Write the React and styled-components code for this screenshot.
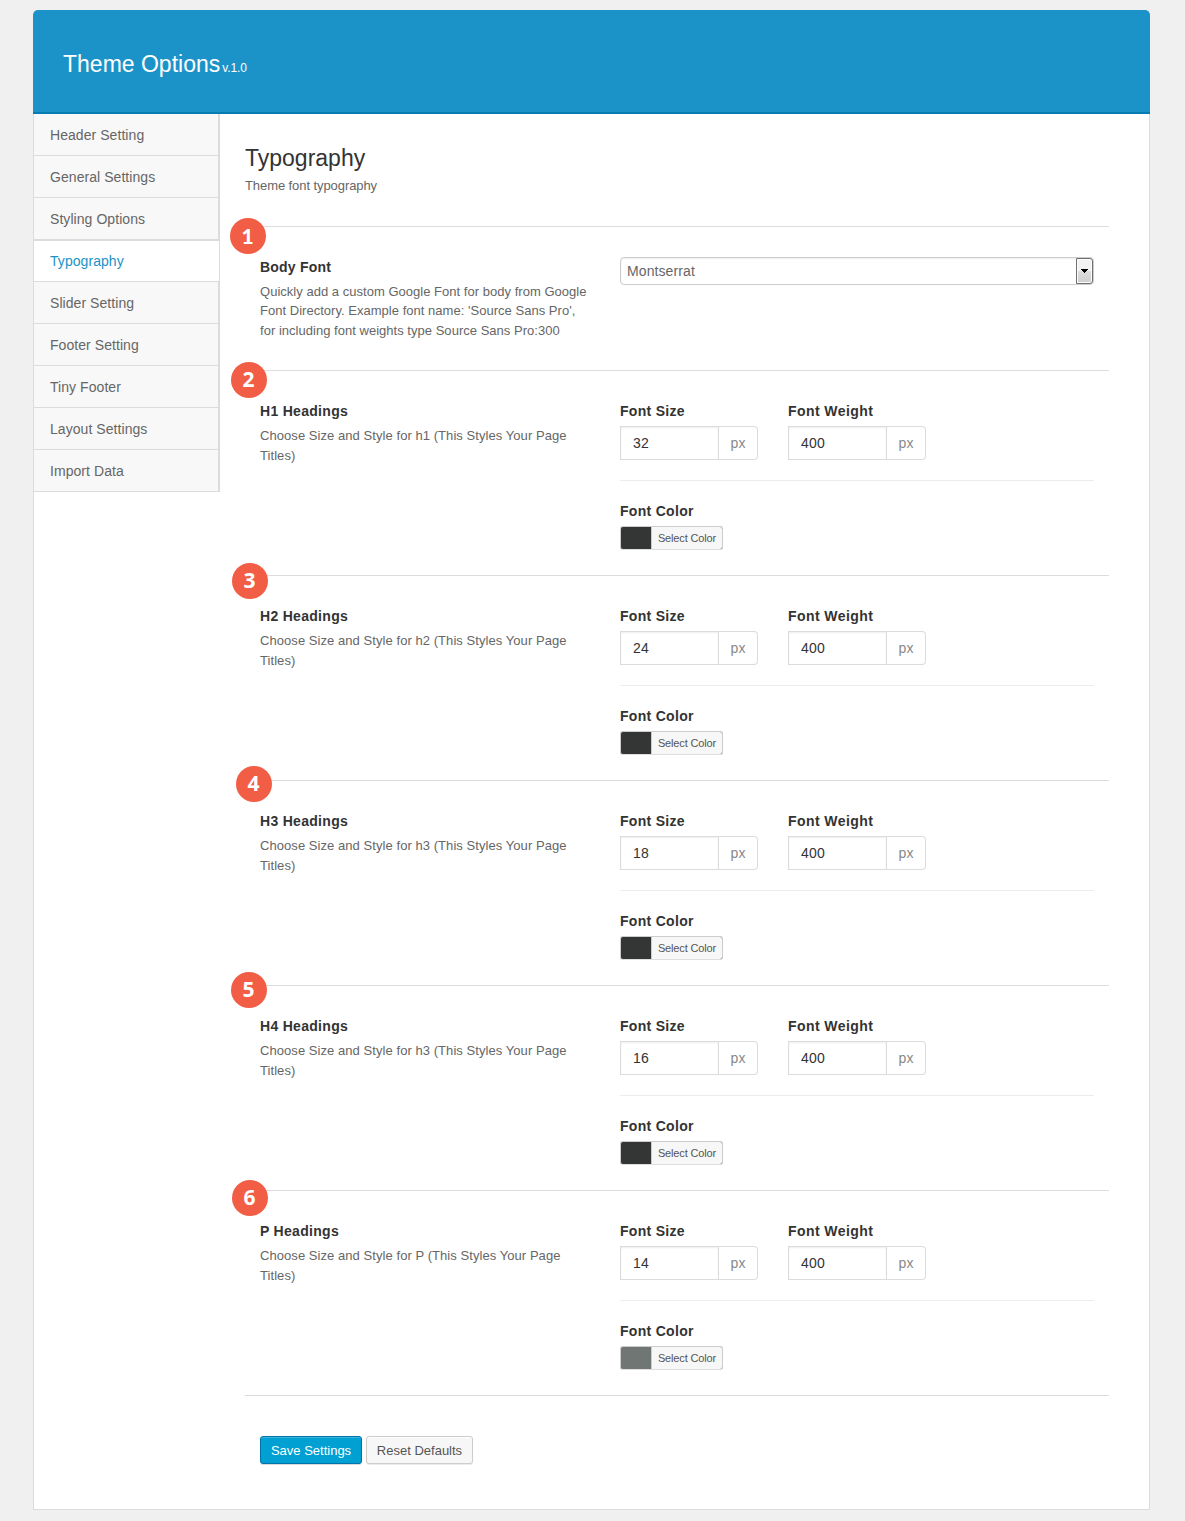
import React from "react";
import styled, { createGlobalStyle } from "styled-components";

const GlobalStyle = createGlobalStyle`
  * { box-sizing: border-box; }
  body {
    margin: 0;
    background: #f0f0f0;
    font-family: "Liberation Sans", Arial, sans-serif;
    font-size: 13px;
    color: #666;
  }
  h1, h2, h3, p, ul { margin: 0; padding: 0; font-weight: normal; }
  input, button { font-family: inherit; }
`;

const Page = styled.div`
  width: 1117px;
  margin: 10px 0 11px 33px;
`;

const Header = styled.header`
  display: flex;
  align-items: baseline;
  gap: 2px;
  height: 104px;
  padding: 40px 30px 0;
  background: #1c93c8;
  border-bottom: 2px solid #077cb0;
  border-radius: 5px 5px 0 0;
  color: #fff;
`;

const Brand = styled.h1`
  font-size: 23px;
  line-height: 28px;
`;

const Version = styled.span`
  font-size: 12px;
  letter-spacing: -0.1px;
`;

const Panel = styled.div`
  display: flex;
  align-items: flex-start;
  height: 1396px;
  background: #fff;
  border: 1px solid #dcdcdc;
  border-top: 0;
`;

const Sidebar = styled.ul`
  flex: none;
  width: 186px;
  list-style: none;
`;

const NavItem = styled.li`
  height: 42px;
  padding-left: 16px;
  font-size: 14px;
  line-height: 42px;
  letter-spacing: 0.06px;
  color: ${(p) => (p.$active ? "#1c93c8" : "#666")};
  background: ${(p) => (p.$active ? "#fff" : "#f8f8f8")};
  border-right: ${(p) => (p.$active ? 1 : 2)}px solid #dcdcdc;
  box-shadow: inset 0 -1px #dcdcdc${(p) => (p.$active ? ", inset 0 1px #dcdcdc" : "")};
`;

const Content = styled.main`
  width: 864px;
  margin-left: 25px;
  padding-top: 29px;
`;

const Heading = styled.h2`
  height: 32px;
  font-size: 23px;
  line-height: 30px;
  color: #333;
`;

const Subtitle = styled.p`
  height: 51px;
  line-height: 21px;
  letter-spacing: -0.08px;
`;

const Section = styled.section`
  position: relative;
  display: flex;
  height: ${(p) => p.$height}px;
  padding: 30px 15px 0;
  border-top: 1px solid #dcdcdc;
`;

const Badge = styled.span`
  position: absolute;
  left: ${(p) => p.$x}px;
  top: ${(p) => p.$y}px;
  width: 36px;
  height: 36px;
  padding-right: 1px;
  border-radius: 50%;
  background: #f15d45;
  color: #fff;
  font: ${(p) => (p.$footed ? '900 21px/35px Lato' : 'bold 21px/35px "Open Sans"')}, sans-serif;
  text-align: center;
`;

const About = styled.div`
  width: 360px;
`;

const Label = styled.h3`
  display: block;
  height: 25px;
  font-size: 14px;
  font-weight: bold;
  line-height: 20px;
  letter-spacing: ${(p) => p.$spacing || 0.3}px;
  color: #333;
`;

const Description = styled.p`
  margin-top: ${(p) => p.$offset || 0}px;
  line-height: 19.5px;
  letter-spacing: ${(p) => p.$spacing}px;
  white-space: pre-line;
`;

const Controls = styled.div`
  width: 474px;
`;

const Select = styled.div`
  display: flex;
  align-items: center;
  justify-content: space-between;
  height: 28px;
  padding-left: 6px;
  border: 1px solid #ccc;
  border-radius: 4px;
  box-shadow: inset 0 1px 2px rgba(0, 0, 0, 0.07);
  font-size: 14px;
  letter-spacing: 0.1px;
  background: #fff;
`;

const SelectArrow = styled.span`
  display: grid;
  place-items: center;
  width: 17px;
  height: 26px;
  border: 1px solid #707070;
  border-radius: 0 3px 3px 0;
  background: linear-gradient(#f2f2f2 0 48%, #dedede 50%, #cfcfcf);
  box-shadow: inset 0 0 0 1px #fcfcfc;
`;

const Fields = styled.div`
  display: flex;
  gap: 30px;
  height: 80px;
  border-bottom: 1px solid #ededed;
`;

const Field = styled.label`
  display: block;
`;

const InputGroup = styled.span`
  display: flex;
  width: 138px;
  height: 34px;
`;

const NumberInput = styled.input`
  width: 99px;
  padding: 0 12px;
  border: 1px solid #dcdcdc;
  border-radius: 0;
  box-shadow: inset 0 1px 2px rgba(0, 0, 0, 0.07);
  font-size: 14px;
  letter-spacing: 0.2px;
  color: #333;
  outline: none;
`;

const Unit = styled.span`
  width: 39px;
  border: 1px solid #dcdcdc;
  border-left: 0;
  border-radius: 0 4px 4px 0;
  font-size: 14px;
  line-height: 32px;
  text-align: center;
  color: #888;
`;

const ColorField = styled.div`
  padding-top: 20px;
`;

const ColorButton = styled.button`
  display: flex;
  width: 103px;
  height: 24px;
  padding: 0;
  border: 1px solid #ccc;
  border-bottom-color: #dedede;
  border-radius: 3px;
  overflow: hidden;
  background: ${(p) => p.$color};
`;

const ColorText = styled.span`
  width: 71px;
  height: 22px;
  margin-left: auto;
  border-left: 1px solid #ccc;
  background: #f7f7f7;
  font-size: 11px;
  line-height: 22px;
  letter-spacing: -0.14px;
  color: #555;
`;

const Actions = styled.div`
  display: flex;
  gap: 4px;
  padding: 40px 15px 0;
  border-top: 1px solid #dcdcdc;
`;

const Button = styled.button`
  width: ${(p) => p.$width}px;
  height: 28px;
  padding: 1px 0 0;
  border: 1px solid ${(p) => (p.$primary ? "#0073aa" : "#ccc")};
  border-radius: 3px;
  background: ${(p) => (p.$primary ? "#00a0d2" : "#f7f7f7")};
  box-shadow: ${(p) =>
    p.$primary
      ? "inset 0 1px 0 rgba(120,200,230,.5), 0 1px 0 rgba(0,0,0,.15)"
      : "inset 0 1px 0 #fff, 0 1px 0 rgba(0,0,0,.08)"};
  color: ${(p) => (p.$primary ? "#fff" : "#555")};
  font-size: 13px;
  line-height: 25px;
`;

const NAV = [
  "Header Setting",
  "General Settings",
  "Styling Options",
  "Typography",
  "Slider Setting",
  "Footer Setting",
  "Tiny Footer",
  "Layout Settings",
  "Import Data",
];

const HEADINGS = [
  { name: "H1", target: "h1", size: 32, color: "#333635", x: -14, y: -9 },
  { name: "H2", target: "h2", size: 24, color: "#333635", x: -13, y: -13 },
  { name: "H3", target: "h3", size: 18, color: "#333635", x: -9, y: -15 },
  { name: "H4", target: "h3", size: 16, color: "#333635", x: -14, y: -14 },
  { name: "P", target: "P", size: 14, color: "#707674", x: -13, y: -11 },
];

function NumberField({ label, value, spacing }) {
  return (
    <Field>
      <Label as="span" $spacing={spacing}>{label}</Label>
      <InputGroup>
        <NumberInput defaultValue={value} />
        <Unit>px</Unit>
      </InputGroup>
    </Field>
  );
}

function HeadingSection({ item, index }) {
  return (
    <Section $height={205}>
      <Badge $x={item.x} $y={item.y}>{index + 2}</Badge>
      <About>
        <Label>{item.name} Headings</Label>
        <Description $spacing={0.06}>
          {`Choose Size and Style for ${item.target} (This Styles Your Page\nTitles)`}
        </Description>
      </About>
      <Controls>
        <Fields>
          <NumberField label="Font Size" value={item.size} />
          <NumberField label="Font Weight" value={400} spacing={0.43} />
        </Fields>
        <ColorField>
          <Label>Font Color</Label>
          <ColorButton $color={item.color}>
            <ColorText>Select Color</ColorText>
          </ColorButton>
        </ColorField>
      </Controls>
    </Section>
  );
}

export default function App() {
  return (
    <>
      <GlobalStyle />
      <Page>
        <Header>
          <Brand>Theme Options</Brand>
          <Version>v.1.0</Version>
        </Header>
        <Panel>
          <Sidebar>
            {NAV.map((name) => (
              <NavItem key={name} $active={name === "Typography"}>{name}</NavItem>
            ))}
          </Sidebar>
          <Content>
            <Heading>Typography</Heading>
            <Subtitle>Theme font typography</Subtitle>
            <Section $height={144}>
              <Badge $footed $x={-15} $y={-9}>1</Badge>
              <About>
                <Label $spacing={0.22}>Body Font</Label>
                <Description $spacing={0.025} $offset={-0.2}>
                  {"Quickly add a custom Google Font for body from Google\nFont Directory. Example font name: 'Source Sans Pro',\nfor including font weights type Source Sans Pro:300"}
                </Description>
              </About>
              <Controls>
                <Select>
                  Montserrat
                  <SelectArrow>
                    <svg width="8" height="4" shapeRendering="crispEdges">
                      <path d="M0 0h7v1H0zM1 1h5v1H1zM2 2h3v1H2zM3 3h1v1H3z" fill="#000" />
                    </svg>
                  </SelectArrow>
                </Select>
              </Controls>
            </Section>
            {HEADINGS.map((item, index) => (
              <HeadingSection key={item.name} item={item} index={index} />
            ))}
            <Actions>
              <Button $primary $width={102}>Save Settings</Button>
              <Button $width={107}>Reset Defaults</Button>
            </Actions>
          </Content>
        </Panel>
      </Page>
    </>
  );
}
